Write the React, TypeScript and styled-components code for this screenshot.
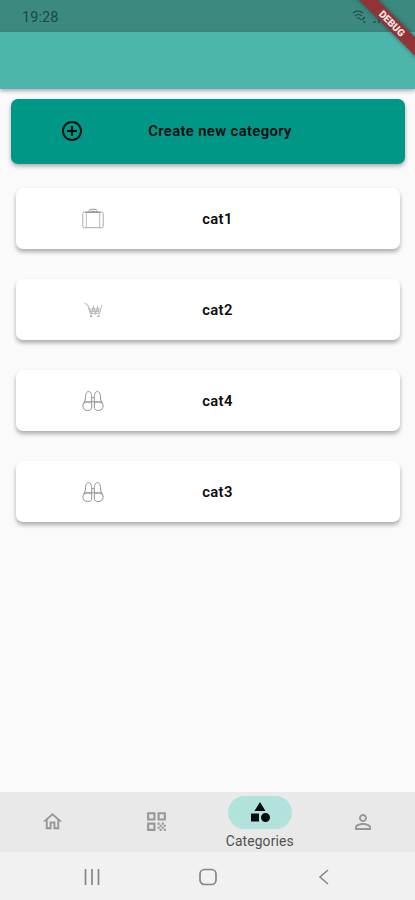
import React from "react";
import styled, { createGlobalStyle } from "styled-components";

const GlobalStyle = createGlobalStyle`
  * { box-sizing: border-box; }
  body { margin: 0; background: #fafafa; font-family: Roboto, "Liberation Sans", sans-serif; }
`;

const Screen = styled.div`
  position: relative;
  display: flex;
  flex-direction: column;
  width: 415px;
  height: 900px;
  overflow: hidden;
  background: #fafafa;
  color: #0c0c0c;
`;

const StatusBar = styled.div`
  display: flex;
  align-items: center;
  justify-content: space-between;
  height: 32px;
  padding: 2px 20px 0 22px;
  background: #3c8980;
  color: #1d4944;
  font-size: 14.5px;
  letter-spacing: 0.1px;
`;

const AppBar = styled.header`
  height: 56.5px;
  background: #4db6ac;
  box-shadow: 0 2px 4px rgba(60, 60, 90, 0.42);
`;

const Ribbon = styled.div`
  position: absolute;
  top: 17px;
  left: 341.5px;
  width: 100px;
  height: 13px;
  transform: rotate(45deg);
  background: #923436;
  box-shadow: 0 0 5px rgba(0, 0, 0, 0.4);
  color: #f1e4e2;
  font-size: 10px;
  font-weight: 900;
  line-height: 13px;
  text-align: center;
`;

const Content = styled.main`
  display: flex;
  flex: 1;
  flex-direction: column;
  padding-top: 10.5px;
`;

const CreateCard = styled.div`
  display: grid;
  grid-template-columns: 122px 174px 1fr;
  align-items: center;
  justify-items: center;
  height: 64.5px;
  margin: 0 10px 0 11px;
  border-radius: 7px;
  background: #009787;
  box-shadow: 0 2px 4px rgba(0, 0, 0, 0.34);
`;

const CategoryList = styled.div`
  display: flex;
  flex-direction: column;
  gap: 30px;
  padding: 24.5px 15px 0 16px;
`;

const CategoryCard = styled.div`
  display: grid;
  grid-template-columns: 153px 97px 1fr;
  align-items: center;
  justify-items: center;
  height: 61px;
  border-radius: 7px;
  background: #fff;
  box-shadow: 0 3px 4px rgba(0, 0, 0, 0.31);
`;

const CardTitle = styled.span`
  font-size: 14.8px;
  font-weight: 600;
  line-height: 20px;
  letter-spacing: 0.38px;
  white-space: nowrap;
`;

const BottomNav = styled.nav`
  display: grid;
  grid-template-columns: repeat(4, 1fr);
  height: 60.5px;
  padding-left: 1px;
  background: #e9e9e9;
`;

const NavItem = styled.div<{ $active?: boolean }>`
  display: flex;
  flex-direction: column;
  align-items: center;
  justify-content: ${(p) => (p.$active ? "flex-start" : "center")};
  padding-top: ${(p) => (p.$active ? "4px" : "0")};
  color: ${(p) => (p.$active ? "#070b0a" : "#979797")};
`;

const ActivePill = styled.div`
  display: flex;
  align-items: center;
  justify-content: center;
  width: 64px;
  height: 33px;
  border-radius: 17px;
  background: #b2e2dc;
`;

const NavLabel = styled.span`
  margin-top: 3px;
  color: #505050;
  font-size: 13.8px;
  line-height: 18px;
  letter-spacing: 0.16px;
`;

const SystemBar = styled.div`
  display: grid;
  grid-template-columns: 149px 83px 150px;
  align-items: center;
  height: 48px;
  padding-left: 17px;
  padding-top: 2px;
  justify-items: center;
  background: #f1f1f1;
`;

const Icon = ({ d, size = 24 }: { d: string; size?: number }) => (
  <svg width={size} height={size} viewBox="0 0 24 24" fill="currentColor">
    <path d={d} />
  </svg>
);

const paths = {
  add: "M13 7h-2v4H7v2h4v4h2v-4h4v-2h-4V7zm-1-5C6.48 2 2 6.48 2 12s4.48 10 10 10 10-4.48 10-10S17.52 2 12 2zm0 18c-4.41 0-8-3.59-8-8s3.59-8 8-8 8 3.59 8 8-3.59 8-8 8z",
  home: "M12 5.69l5 4.5V18h-2v-6H9v6H7v-7.81l5-4.5M12 3L2 12h3v8h6v-6h2v6h6v-8h3L12 3z",
  qr: "M3 11h8V3H3v8zm2-6h4v4H5V5zM3 21h8v-8H3v8zm2-6h4v4H5v-4zM13 3v8h8V3h-8zm6 6h-4V5h4v4zM19 19h2v2h-2zM13 13h2v2h-2zM15 15h2v2h-2zM13 17h2v2h-2zM15 19h2v2h-2zM17 17h2v2h-2zM17 13h2v2h-2zM19 15h2v2h-2z",
  category: "M12 2l-5.5 9h11zM13 17.5a4.5 4.5 0 1 0 9 0a4.5 4.5 0 1 0-9 0M3 13.5h8v8H3z",
  person: "M12 5.9c1.16 0 2.1.94 2.1 2.1s-.94 2.1-2.1 2.1S9.9 9.16 9.9 8s.94-2.1 2.1-2.1m0 9c2.97 0 6.1 1.46 6.1 2.1v1.1H5.9V17c0-.64 3.13-2.1 6.1-2.1M12 4C9.79 4 8 5.79 8 8s1.79 4 4 4 4-1.79 4-4-1.79-4-4-4zm0 9c-2.67 0-8 1.34-8 4v3h16v-3c0-2.66-5.33-4-8-4z",
};

const SuitcaseIcon = () => (
  <svg width="24" height="24" viewBox="0 0 24 24" fill="none" stroke="#aaa">
    <rect x="1.8" y="5" width="20.4" height="15.7" rx="1.5" />
    <path d="M5.3 5v15.7M18.7 5v15.7" strokeWidth=".8" />
    <path d="M4.5 5.3h15" stroke="#888" />
    <path d="M8.2 5V3.6Q8.5 2.3 10 2.3h4q1.5 0 1.8 1.3V5M10 4.3h4" stroke="#999" />
  </svg>
);

const CartIcon = () => (
  <svg width="24" height="24" viewBox="0 0 24 24" fill="none" stroke="#bbb">
    <path d="M3.5 5.2l3.2 1.6 2.5 8.8h9.3l2.5-8.5" />
    <path d="M7.2 8.5l3.4 7 1.8-6.6 2.2 6.6 2-6.6 1.5 6M8 11h11M9 13.4h9.5" strokeWidth="1.2" />
    <path d="M9 18.1h2M16.5 18.1h2" stroke="#aaa" strokeWidth="1.7" />
  </svg>
);

const ShoesIcon = () => (
  <svg width="24" height="24" viewBox="0 0 24 24" fill="none" stroke="#8c8c8c" strokeWidth=".95">
    <path d="M4.5 9C4.5 5 5.4 2.6 7.6 2.6S10.7 5 10.7 9v9c0 2.2-1.4 3.5-3.8 3.5-3.4 0-5-2-5-4.5 0-3 2.6-4.5 2.6-8Z" />
    <path d="M19.5 9c0-4-.9-6.4-3.1-6.4S13.3 5 13.3 9v9c0 2.2 1.4 3.5 3.8 3.5 3.4 0 5-2 5-4.5 0-3-2.6-4.5-2.6-8Z" />
    <path d="M3 12.6h18M2.5 14.2q4.5-2 8-.2M21.5 14.2q-4.5-2-8-.2M10.7 8.5h2.6" strokeWidth=".75" />
  </svg>
);

const SignalIcon = () => (
  <svg width="43" height="18" viewBox="0 0 43 18" fill="none" stroke="#1d4944" strokeWidth="1.2">
    <path d="M1 5q5-4 10 0M3 8q3-3 7 0M5 10q2-1 4 2M10 12l3-3M11 14h3M21 14h3M27 10v5" />
    <path d="M31 5h5v10h-5z" fill="#1d4944" />
  </svg>
);

const categories = [
  { name: "cat1", icon: <SuitcaseIcon /> },
  { name: "cat2", icon: <CartIcon /> },
  { name: "cat4", icon: <ShoesIcon /> },
  { name: "cat3", icon: <ShoesIcon /> },
];

export default function App() {
  return (
    <>
      <GlobalStyle />
      <Screen>
        <StatusBar>
          <span>19:28</span>
          <SignalIcon />
        </StatusBar>
        <AppBar />
        <Content>
          <CreateCard>
            <Icon d={paths.add} />
            <CardTitle>Create new category</CardTitle>
          </CreateCard>
          <CategoryList>
            {categories.map((category) => (
              <CategoryCard key={category.name}>
                {category.icon}
                <CardTitle>{category.name}</CardTitle>
              </CategoryCard>
            ))}
          </CategoryList>
        </Content>
        <BottomNav>
          <NavItem><Icon d={paths.home} size={23} /></NavItem>
          <NavItem><Icon d={paths.qr} size={25} /></NavItem>
          <NavItem $active>
            <ActivePill><Icon d={paths.category} /></ActivePill>
            <NavLabel>Categories</NavLabel>
          </NavItem>
          <NavItem><Icon d={paths.person} /></NavItem>
        </BottomNav>
        <SystemBar>
          <svg width="18" height="18" viewBox="0 0 18 18" stroke="#858585" strokeWidth="1.7">
            <path d="M2.5 1v16M9 1v16M15.5 1v16" />
          </svg>
          <svg width="18" height="18" viewBox="0 0 18 18" fill="none" stroke="#858585" strokeWidth="1.7">
            <rect x="1" y="1.5" width="16" height="15" rx="4.5" />
          </svg>
          <svg width="18" height="18" viewBox="0 0 18 18" fill="none" stroke="#858585" strokeWidth="1.5">
            <path d="M13 2L5 9l8 7" />
          </svg>
        </SystemBar>
        <Ribbon>DEBUG</Ribbon>
      </Screen>
    </>
  );
}
